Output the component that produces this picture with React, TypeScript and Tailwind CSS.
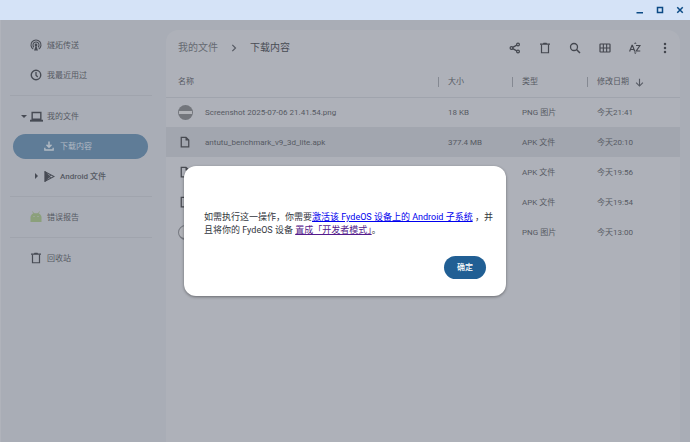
import type { ReactNode } from "react";

type IconProps = { className?: string };

const stroke = {
  fill: "none",
  stroke: "currentColor",
  strokeWidth: 2,
} as const;

function Icon({ className = "size-3", children }: IconProps & { children: ReactNode }) {
  return (
    <svg viewBox="0 0 24 24" className={`shrink-0 ${className}`} fill="currentColor" aria-hidden="true">
      {children}
    </svg>
  );
}

const CastIcon = () => (
  <Icon>
    <g {...stroke} strokeWidth={2.200}>
      <path d="M6.500 20.300A10 10 0 1 1 17.500 20.300" />
      <path d="M8 16.500A6 6 0 1 1 16 16.500" />
    </g>
    <circle cx="12" cy="12" r="2.800" />
    <path d="M12 12l4 11H8z" />
  </Icon>
);

const ClockIcon = () => (
  <Icon>
    <circle cx="12" cy="12" r="9.500" {...stroke} strokeWidth={2.800} />
    <path d="M12 6v6.500l3.500 3.500" {...stroke} strokeWidth={2.600} />
  </Icon>
);

const LaptopIcon = () => (
  <Icon className="size-[13px]">
    <path d="M4 4.500h16v12.500H4z" {...stroke} strokeWidth={2.600} />
    <path d="M0 18h24v3.500H0z" />
  </Icon>
);

const DownloadIcon = () => (
  <Icon className="size-[10px]">
    <path d="M12 1v14M6 9l6 6 6-6" {...stroke} strokeWidth={3.600} />
    <path d="M2 16v5.500h20V16" {...stroke} strokeWidth={3.200} />
  </Icon>
);

const PlayIcon = () => (
  <Icon className="size-[11px]">
    <path d="M2 1.500l20 10.500L2 22.500z" {...stroke} strokeWidth={2.200} />
    <path d="M2 1.500L14.500 15M2 22.500L14.500 9" {...stroke} strokeWidth={2.200} />
    <path d="M2 2l9 10-9 10z" />
  </Icon>
);

const AndroidIcon = () => (
  <Icon className="size-3 text-[#8ba07b]">
    <path d="M1 22V13C1 8.500 4 5 8 4.300h8c4 .7 7 4.200 7 8.700v9z" />
    <path d="M5 1l3 5M19 1l-3 5" {...stroke} strokeWidth={1.600} />
    <path d="M7 10h2v2H7zM15 10h2v2h-2z" fill="#a9adb6" />
  </Icon>
);

const TrashIcon = () => (
  <Icon>
    <path d="M5 5v16.500h14V5" {...stroke} strokeWidth={2.400} />
    <path d="M2 3h6l1-1.500h6l1 1.500h6v2.500H2z" />
  </Icon>
);

const ShareIcon = () => (
  <Icon>
    <g {...stroke} strokeWidth={2.400}>
      <circle cx="5" cy="12" r="2.800" />
      <circle cx="18" cy="5" r="2.800" />
      <circle cx="18" cy="19" r="2.800" />
      <path d="M7.500 10.700L15.500 6.300M7.500 13.300l8 4.400" />
    </g>
  </Icon>
);

const SearchIcon = () => (
  <Icon>
    <circle cx="10" cy="10" r="7" {...stroke} strokeWidth={2.600} />
    <path d="M15 15l7 7" {...stroke} strokeWidth={3} />
  </Icon>
);

const GridIcon = () => (
  <Icon>
    <rect x="2" y="4" width="20" height="16" rx="1" {...stroke} strokeWidth={2.400} />
    <path d="M8.700 4v16M15.300 4v16M2 12h20" {...stroke} strokeWidth={2.200} />
  </Icon>
);

const SortIcon = () => (
  <Icon>
    <path d="M1.200 19L6 6.500h.8L11.600 19M3 15h7M14 7h8L14.500 18h8" {...stroke} strokeWidth={2.400} />
    <path d="M9.700 3.500L12.500.5l2.800 3zM9.700 21l2.800 3 2.800-3z" />
  </Icon>
);

const MoreIcon = () => (
  <Icon>
    <circle cx="12" cy="4" r="2.500" />
    <circle cx="12" cy="12" r="2.500" />
    <circle cx="12" cy="20" r="2.500" />
  </Icon>
);

const FileIcon = () => (
  <Icon>
    <path d="M4.500 2.500h9.500l5.500 5.500v13.500h-15z" {...stroke} strokeWidth={2.500} />
    <path d="M13 2v7h7z" />
  </Icon>
);

const ArrowDownIcon = () => (
  <Icon className="size-[9px]">
    <path d="M12 2v19M3 12.500l9 9 9-9" {...stroke} strokeWidth={3} />
  </Icon>
);

const ChevronIcon = () => (
  <Icon className="size-2">
    <path d="M7 2.500l9.500 9.500L7 21.500" {...stroke} strokeWidth={3.600} />
  </Icon>
);

function NavItem({
  icon,
  label,
  arrow,
  nested,
  active,
  medium,
}: {
  icon: ReactNode;
  label: string;
  arrow?: "open" | "closed";
  nested?: boolean;
  active?: boolean;
  medium?: boolean;
}) {
  return (
    <li className="flex h-[30px] items-center px-3">
      <button
        type="button"
        className={`flex h-[25px] w-full items-center rounded-full ${nested ? "pl-5" : "pl-[7px]"} ${
          active ? "bg-[#5f7c97] text-[#b2bac4]" : "text-[#474b54]"
        }`}
      >
        <span className="flex w-2 justify-center">
          {arrow && (
            <svg viewBox="0 0 8 8" className="size-2" fill="currentColor" aria-hidden="true">
              <path d={arrow === "open" ? "M1 3h6L4 6z" : "M2 1v6L5 4z"} />
            </svg>
          )}
        </span>
        <span className="mr-1 ml-px flex w-[14px] items-center justify-center">{icon}</span>
        <span
          className={`pt-0.5 ${active ? "text-[#b2bac4]" : "text-[#565a63]"} ${medium ? "font-medium" : ""}`}
        >
          {label}
        </span>
      </button>
    </li>
  );
}

const Divider = () => <hr className="my-[5px] mr-2 ml-[9px] border-[#a0a4ad]" />;

const files = [
  { name: "Screenshot 2025-07-06 21.41.54.png", size: "18 KB", type: "PNG 图片", date: "今天21:41", thumb: "bar" },
  { name: "antutu_benchmark_v9_3d_lite.apk", size: "377.4 MB", type: "APK 文件", date: "今天20:10", selected: true },
  { name: "", size: "", type: "APK 文件", date: "今天19:56" },
  { name: "", size: "", type: "APK 文件", date: "今天19:54" },
  { name: "", size: "", type: "PNG 图片", date: "今天13:00", thumb: "light" },
];

function Thumb({ kind }: { kind?: string }) {
  if (kind === "bar") {
    return (
      <span className="flex size-[15px] items-center justify-center rounded-full bg-[#73767c]">
        <span className="h-[3px] w-[13px] bg-[#b1b3b8]" />
      </span>
    );
  }
  if (kind === "light") {
    return <span className="size-[15px] rounded-full border border-b-2 border-[#777a82] bg-[#b1b3b9]" />;
  }
  return <FileIcon />;
}

const tools = [
  { label: "分享", icon: <ShareIcon /> },
  { label: "删除", icon: <TrashIcon /> },
  { label: "搜索", icon: <SearchIcon /> },
  { label: "网格视图", icon: <GridIcon /> },
  { label: "排序", icon: <SortIcon /> },
  { label: "更多", icon: <MoreIcon /> },
];

function HeadCell({ children }: { children: ReactNode }) {
  return (
    <th scope="col" className="p-0 pt-0.5 font-normal">
      <span className="flex h-[10px] items-center gap-[6px] border-l border-[#858992] pl-[9px]">{children}</span>
    </th>
  );
}

export default function App() {
  return (
    <div className="flex min-h-screen flex-col bg-[#a9adb6] font-['Roboto','Noto_Sans_CJK_SC',sans-serif] text-[8px] leading-3 text-[#565a63]">
      <header className="flex h-5 items-center justify-end gap-2 bg-[#d5e3f7] pr-1 text-[#0b4a85]">
        <button type="button" aria-label="最小化" className="size-3">
          <Icon>
            <path d="M5 16h13v3H5z" />
          </Icon>
        </button>
        <button type="button" aria-label="最大化" className="size-3">
          <Icon>
            <rect x="7" y="7" width="10" height="10" {...stroke} strokeWidth={3} />
          </Icon>
        </button>
        <button type="button" aria-label="关闭" className="size-3">
          <Icon>
            <path d="M6.500 6.500l11 11M17.500 6.500l-11 11" {...stroke} strokeWidth={3} />
          </Icon>
        </button>
      </header>

      <div className="relative flex flex-1">
        <nav className="w-40 shrink-0 border-l border-[#b0b3bb] pt-[10px]">
          <ul>
            <NavItem icon={<CastIcon />} label="燧炻传送" />
            <NavItem icon={<ClockIcon />} label="我最近用过" />
          </ul>
          <Divider />
          <ul>
            <NavItem icon={<LaptopIcon />} label="我的文件" arrow="open" />
            <NavItem icon={<DownloadIcon />} label="下载内容" nested active />
            <NavItem icon={<PlayIcon />} label="Android 文件" arrow="closed" nested medium />
          </ul>
          <Divider />
          <ul>
            <NavItem icon={<AndroidIcon />} label="错误报告" />
          </ul>
          <Divider />
          <ul>
            <NavItem icon={<TrashIcon />} label="回收站" />
          </ul>
        </nav>

        <main className="mt-[10px] mr-[10px] ml-[6px] min-w-0 flex-1 rounded-t-xl bg-[#aeb1b9]">
          <div className="flex h-9 items-center justify-between pr-[9px] pl-3">
            <div className="flex items-center gap-3 text-[10px]">
              <a href="#files" className="text-[#666a72]">
                我的文件
              </a>
              <ChevronIcon />
              <span className="text-[#484c54]">下载内容</span>
            </div>
            <div className="flex gap-[18px] text-[#44474f]">
              {tools.map((tool) => (
                <button key={tool.label} type="button" aria-label={tool.label}>
                  {tool.icon}
                </button>
              ))}
            </div>
          </div>

          <table className="w-full table-fixed border-collapse text-left">
            <colgroup>
              <col />
              <col className="w-[74px]" />
              <col className="w-[75px]" />
              <col className="w-[93px]" />
            </colgroup>
            <thead>
              <tr className="h-[31px] border-b border-[#a0a4ad]">
                <th scope="col" className="p-0 pt-0.5 pl-3 font-normal">
                  名称
                </th>
                <HeadCell>大小</HeadCell>
                <HeadCell>类型</HeadCell>
                <HeadCell>
                  修改日期 <ArrowDownIcon />
                </HeadCell>
              </tr>
            </thead>
            <tbody>
              {files.map((file) => (
                <tr key={file.date} className={`h-[30px] ${file.selected ? "bg-[#a2a6af]" : ""}`}>
                  <td className="p-0 pl-[11px]">
                    <span className="flex items-center gap-3">
                      <span className="flex w-4 justify-center text-[#484b52]">
                        <Thumb kind={file.thumb} />
                      </span>
                      <span className="pt-0.5">{file.name}</span>
                    </span>
                  </td>
                  <td className="p-0 pt-0.5 pl-[10px]">{file.size}</td>
                  <td className="p-0 pt-0.5 pl-[10px]">{file.type}</td>
                  <td className="p-0 pt-0.5 pl-[10px]">{file.date}</td>
                </tr>
              ))}
            </tbody>
          </table>
        </main>

        <div className="absolute inset-0 flex items-center justify-center">
          <div
            role="dialog"
            aria-modal="true"
            aria-label="提示"
            className="flex w-[322px] flex-col rounded-xl bg-white pt-[45px] pr-2 pb-[17px] pl-5 shadow-[0_1px_3px_rgba(0,0,0,0.4)]"
          >
            <p className="text-[9px] leading-[13px] text-[#33373e]">
              如需执行这一操作，你需要
              <a href="#android" className="text-[#0000ee] underline">
                激活该 FydeOS 设备上的 Android 子系统
              </a>{" "}
              ，并且将你的 FydeOS 设备{" "}
              <a href="#developer" className="text-[#551a8b] underline">
                置成「开发者模式」
              </a>
              。
            </p>
            <button
              type="button"
              className="mt-[19px] mr-3 h-[23px] w-[42px] self-end rounded-full bg-[#215f94] font-medium text-white"
            >
              确定
            </button>
          </div>
        </div>
      </div>
    </div>
  );
}
